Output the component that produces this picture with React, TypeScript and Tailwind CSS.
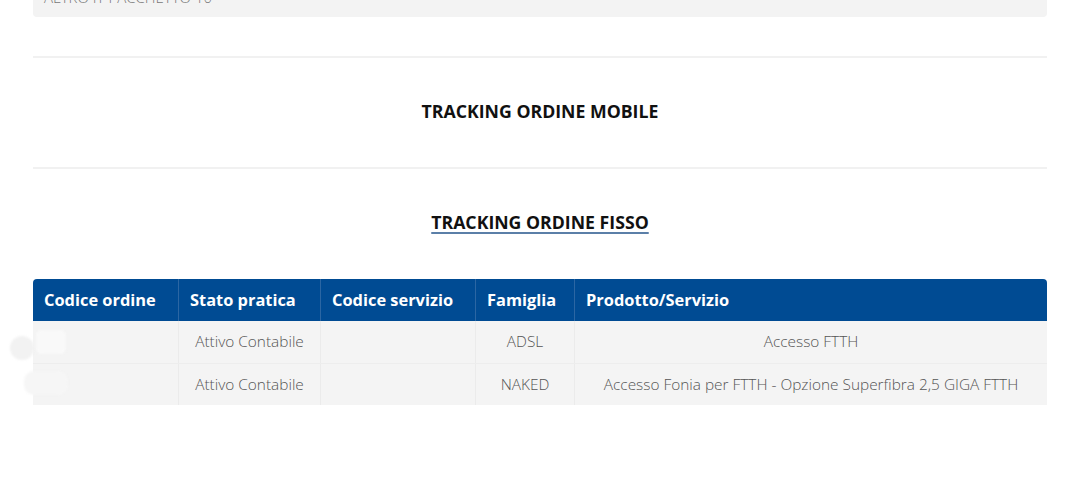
import React from "react";

const rows = [
  { stato: "Attivo Contabile", servizio: "", famiglia: "ADSL", prodotto: "Accesso FTTH" },
  { stato: "Attivo Contabile", servizio: "", famiglia: "NAKED", prodotto: "Accesso Fonia per FTTH - Opzione Superfibra 2,5 GIGA FTTH" },
];

export default function App() {
  return (
    <div
      className="relative w-[1080px] h-[490px] overflow-hidden bg-white"
      style={{ fontFamily: '"Open Sans", "Noto Sans", sans-serif' }}
    >
      <div className="px-[33px]">
        <div className="mt-[-22px] h-[39px] rounded-[4px] bg-[#f3f3f3] px-[11px] pt-[9px] text-[15px] font-light text-[#777] leading-[20px]">
          ALTRO IT PACCHETTO 10
        </div>
        <div className="mt-[39px] h-[2px] bg-[#f1f1f1]" />
        <div className="h-[109px] pb-[2px] flex items-center justify-center text-[17.7px] font-bold text-[#111]">
          TRACKING ORDINE MOBILE
        </div>
        <div className="h-[2px] bg-[#f1f1f1]" />
        <div className="h-[110px] pb-[4px] flex items-center justify-center">
          <span className="text-[17.7px] font-bold text-[#111] underline decoration-[#5b7fa8] decoration-2 underline-offset-[3px]">
            TRACKING ORDINE FISSO
          </span>
        </div>
        <div className="rounded-t-[4px] overflow-hidden">
          <div className="grid grid-cols-[145px_142px_155px_99px_1fr] h-[42px] bg-[#004b93] text-white text-[16.4px] font-bold">
            <div className="flex items-center pl-[11px]">Codice ordine</div>
            <div className="flex items-center pl-[11px] border-l border-[#2b66a3]">Stato pratica</div>
            <div className="flex items-center pl-[11px] border-l border-[#2b66a3]">Codice servizio</div>
            <div className="flex items-center pl-[11px] border-l border-[#2b66a3]">Famiglia</div>
            <div className="flex items-center pl-[11px] border-l border-[#2b66a3]">Prodotto/Servizio</div>
          </div>
          {rows.map((r, i) => (
            <div
              key={i}
              className={`grid grid-cols-[145px_142px_155px_99px_1fr] h-[42px] text-[15.4px] font-light text-[#555] ${
                i === 0 ? "bg-[#f4f4f4]" : "bg-[#f4f4f4] border-t border-[#ededed]"
              }`}
            >
              <div className="flex items-center justify-center" />
              <div className="flex items-center justify-center border-l border-[#ebebeb]">{r.stato}</div>
              <div className="flex items-center justify-center border-l border-[#ebebeb]">{r.servizio}</div>
              <div className="flex items-center justify-center border-l border-[#ebebeb]">{r.famiglia}</div>
              <div className="flex items-center justify-center border-l border-[#ebebeb]">{r.prodotto}</div>
            </div>
          ))}
        </div>
      </div>
      {/* redaction blurs */}
      <div className="absolute left-[10px] top-[336px] w-[24px] h-[24px] rounded-full bg-[#f2f2f2] blur-[1px]" />
      <div className="absolute left-[36px] top-[330px] w-[30px] h-[24px] rounded-[6px] bg-[#f9f9f9] blur-[1px]" />
      <div className="absolute left-[24px] top-[371px] w-[44px] h-[24px] rounded-[10px] bg-[#f6f6f6] blur-[1px]" />
    </div>
  );
}
